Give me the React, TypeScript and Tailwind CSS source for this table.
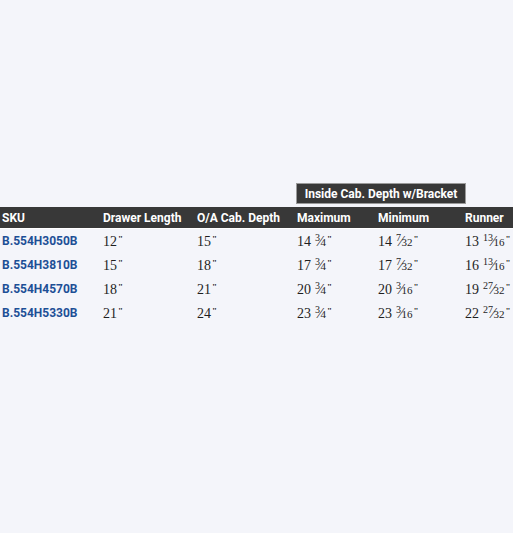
type Frac = { whole: string; num?: string; den?: string };

type Row = {
  sku: string;
  drawer: string;
  cab: string;
  max: Frac;
  min: Frac;
  runner: Frac;
};

const rows: Row[] = [
  {
    sku: "B.554H3050B",
    drawer: "12",
    cab: "15",
    max: { whole: "14", num: "3", den: "4" },
    min: { whole: "14", num: "7", den: "32" },
    runner: { whole: "13", num: "13", den: "16" },
  },
  {
    sku: "B.554H3810B",
    drawer: "15",
    cab: "18",
    max: { whole: "17", num: "3", den: "4" },
    min: { whole: "17", num: "7", den: "32" },
    runner: { whole: "16", num: "13", den: "16" },
  },
  {
    sku: "B.554H4570B",
    drawer: "18",
    cab: "21",
    max: { whole: "20", num: "3", den: "4" },
    min: { whole: "20", num: "3", den: "16" },
    runner: { whole: "19", num: "27", den: "32" },
  },
  {
    sku: "B.554H5330B",
    drawer: "21",
    cab: "24",
    max: { whole: "23", num: "3", den: "4" },
    min: { whole: "23", num: "3", den: "16" },
    runner: { whole: "22", num: "27", den: "32" },
  },
];

const cols = "grid grid-cols-[103px_94px_100px_81px_87px_1fr]";

function Inch() {
  return <span className="ml-[1px] relative -top-[4px] text-[9px] font-bold">"</span>;
}

function Fraction({ value }: { value: Frac }) {
  return (
    <span>
      {value.whole}
      {value.num && (
        <span className="ml-[4px] inline-flex items-baseline">
          <span className="relative -top-[5px] text-[10px] leading-none">{value.num}</span>
          <span className="mx-[-1px] text-[15px] leading-none">⁄</span>
          <span className="text-[11px] leading-none">{value.den}</span>
        </span>
      )}
      <Inch />
    </span>
  );
}

export default function App() {
  return (
    <div className="h-[550px] w-[513px] bg-white">
      <div className="h-[533px] bg-[#f4f5fa] pt-[183px]">
        <div className={cols}>
          <div className="col-span-3" />
          <div className="col-span-3 flex">
            <div className="ml-[-1px] flex h-[21px] w-[170px] items-center justify-center border border-[#9a9a9a] bg-[#383838] font-['Roboto',sans-serif] text-[12px] font-bold text-white">
              Inside Cab. Depth w/Bracket
            </div>
          </div>
        </div>

        <div
          className={`${cols} mt-[3px] h-[21px] items-center bg-[#383838] font-['Roboto',sans-serif] text-[12px] font-bold text-white`}
        >
          <div className="pl-[2px]">SKU</div>
          <div>Drawer Length</div>
          <div>O/A Cab. Depth</div>
          <div>Maximum</div>
          <div>Minimum</div>
          <div>Runner</div>
        </div>
        <div className="h-[1px] bg-white" />

        {rows.map((row) => (
          <div key={row.sku} className={`${cols} h-[24px] items-center text-[#1e1e1e]`}>
            <div className="pl-[2px] font-['Roboto',sans-serif] text-[12px] font-bold text-[#1d4f96]">
              {row.sku}
            </div>
            <div className="font-['Liberation_Serif',serif] text-[14px]">
              {row.drawer}
              <Inch />
            </div>
            <div className="font-['Liberation_Serif',serif] text-[14px]">
              {row.cab}
              <Inch />
            </div>
            <div className="font-['Liberation_Serif',serif] text-[14px]">
              <Fraction value={row.max} />
            </div>
            <div className="font-['Liberation_Serif',serif] text-[14px]">
              <Fraction value={row.min} />
            </div>
            <div className="font-['Liberation_Serif',serif] text-[14px]">
              <Fraction value={row.runner} />
            </div>
          </div>
        ))}
      </div>
    </div>
  );
}
